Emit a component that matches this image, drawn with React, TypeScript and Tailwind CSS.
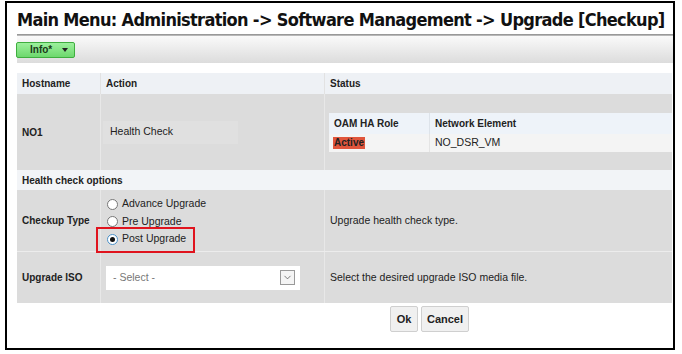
import { ChevronDown } from "lucide-react";

const cellText = "font-['Liberation_Sans',Arial,sans-serif] text-[10.5px] text-[#222]";
const headText = "font-['Liberation_Sans',Arial,sans-serif] text-[10px] font-bold text-[#222]";

function Radio({ label, checked }: { label: string; checked?: boolean }) {
  return (
    <label className="flex items-center gap-[4px] h-[17.5px]">
      <span
        className={`w-[11px] h-[11px] rounded-full border flex items-center justify-center bg-white ${
          checked ? "border-[#4a90c8]" : "border-[#777]"
        }`}
      >
        {checked && <span className="w-[5px] h-[5px] rounded-full bg-[#111]" />}
      </span>
      <span className={cellText}>{label}</span>
    </label>
  );
}

export default function App() {
  return (
    <div className="w-[682px] h-[354px] bg-white pl-[5px] pt-[1px]">
      <div className="w-[670px] h-[349px] border-2 border-black pl-[10px] flex flex-col overflow-hidden">
        {/* Titre */}
        <div className="h-[31px] flex items-end pb-[5px]">
          <h1 className="font-['DejaVu_Sans_Condensed','DejaVu_Sans',sans-serif] font-bold text-[18px] tracking-[-0.68px] leading-none text-[#111] whitespace-nowrap">
            Main Menu: Administration -&gt; Software Management -&gt; Upgrade [Checkup]
          </h1>
        </div>
        <div className="h-[2px] bg-gradient-to-b from-[#8a8a8a] to-[#c8c8c8]" />

        {/* Barre d'outils */}
        <div className="h-[27px] bg-gradient-to-b from-[#fafafa] to-[#dcdcdc] flex items-center">
          <button className="ml-[-1px] w-[59px] h-[16px] rounded-[2px] border border-[#3fae3f] bg-gradient-to-b from-[#9cf09c] to-[#6dd86d] flex items-center pl-[13px] gap-[10px]">
            <span className="font-['Liberation_Sans',Arial,sans-serif] text-[10px] font-bold text-[#1a3a1a]">Info*</span>
            <span className="w-0 h-0 border-l-[3px] border-r-[3px] border-t-[4px] border-l-transparent border-r-transparent border-t-[#222]" />
          </button>
        </div>

        <div className="h-[10px]" />

        {/* Tableau */}
        <div className="w-[655px] flex flex-col">
          <div className="flex h-[21px] bg-[#eef1f5]">
            <div className={`w-[84px] pl-[5px] flex items-center border-r border-[#e2e2e2] ${headText}`}>Hostname</div>
            <div className={`w-[224px] pl-[5px] flex items-center border-r border-[#e2e2e2] ${headText}`}>Action</div>
            <div className={`flex-1 pl-[5px] flex items-center ${headText}`}>Status</div>
          </div>

          <div className="flex h-[76px] bg-[#dcdcdc]">
            <div className={`w-[84px] pl-[5px] flex items-center border-r border-[#e8e8e8] ${headText}`}>NO1</div>
            <div className="w-[224px] pl-[2px] flex items-center border-r border-[#e8e8e8]">
              <div className={`w-[135px] h-[23px] bg-[#e0e0e0] pl-[7px] flex items-center ${cellText}`}>Health Check</div>
            </div>
            <div className="flex-1 pl-[4px] pt-[19px]">
              <div className="flex h-[21px] bg-[#eef3f9]">
                <div className={`w-[101px] pl-[5px] flex items-center border-r border-[#dde3ea] ${headText}`}>OAM HA Role</div>
                <div className={`flex-1 pl-[5px] flex items-center ${headText}`}>Network Element</div>
              </div>
              <div className="flex h-[18px] bg-[#f4f4f4]">
                <div className="w-[101px] pl-[4px] flex items-center border-r border-[#e4e4e4]">
                  <span className={`bg-[#e0553c] px-[1px] leading-[12px] ${headText}`}>Active</span>
                </div>
                <div className={`flex-1 pl-[5px] flex items-center ${cellText}`}>NO_DSR_VM</div>
              </div>
            </div>
          </div>

          <div className={`h-[20px] bg-[#f2f4f7] pl-[5px] flex items-center ${headText}`}>Health check options</div>

          <div className="flex h-[62px] bg-[#dcdcdc] border-b border-[#ececec]">
            <div className={`w-[84px] pl-[5px] flex items-center border-r border-[#e8e8e8] ${headText}`}>Checkup Type</div>
            <div className="w-[224px] pl-[6px] flex items-center border-r border-[#e8e8e8]">
              <div className="flex flex-col pt-[2px]">
                <Radio label="Advance Upgrade" />
                <Radio label="Pre Upgrade" />
                <div className="relative">
                  <Radio label="Post Upgrade" checked />
                  <div className="absolute left-[-11px] top-[-3px] w-[99px] h-[26px] border-2 border-[#e0141e]" />
                </div>
              </div>
            </div>
            <div className={`flex-1 pl-[5px] flex items-center ${cellText}`}>Upgrade health check type.</div>
          </div>

          <div className="flex h-[51px] bg-[#dcdcdc]">
            <div className={`w-[84px] pl-[5px] flex items-center border-r border-[#e8e8e8] ${headText}`}>Upgrade ISO</div>
            <div className="w-[224px] pl-[5px] flex items-center border-r border-[#e8e8e8]">
              <div className="w-[194px] h-[24px] bg-white flex items-center justify-between pl-[7px] pr-[5px]">
                <span className={`${cellText} text-[#777]`}>- Select -</span>
                <span className="w-[15px] h-[15px] border border-[#999] flex items-center justify-center bg-[#f4f4f4]">
                  <ChevronDown className="w-[11px] h-[11px] text-[#444]" strokeWidth={1.5} />
                </span>
              </div>
            </div>
            <div className={`flex-1 pl-[5px] flex items-center ${cellText}`}>Select the desired upgrade ISO media file.</div>
          </div>
        </div>

        {/* Boutons */}
        <div className="flex gap-[3px] pl-[373px] pt-[3px]">
          <button className={`w-[28px] h-[26px] rounded-[2px] border border-[#cfcfcf] bg-[#f0f0f0] ${headText} text-[11px]`}>Ok</button>
          <button className={`w-[48px] h-[26px] rounded-[2px] border border-[#cfcfcf] bg-[#f0f0f0] ${headText} text-[11px]`}>Cancel</button>
        </div>
      </div>
    </div>
  );
}
